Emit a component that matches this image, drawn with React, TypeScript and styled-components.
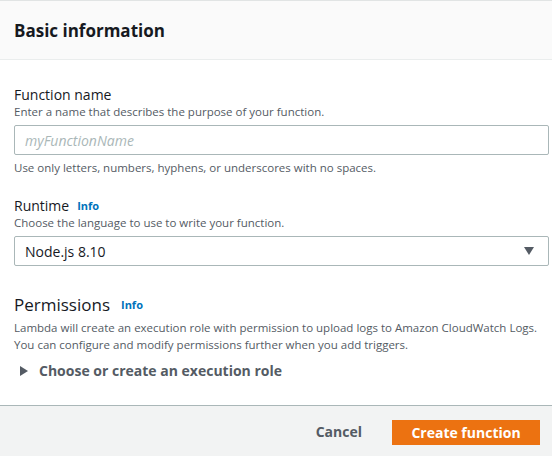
import styled, { createGlobalStyle } from "styled-components";

const GlobalStyle = createGlobalStyle`
  html, body {
    margin: 0;
    padding: 0;
    background: #ffffff;
  }
  body {
    font-family: "Open Sans", "Liberation Sans", sans-serif;
    color: #16191f;
  }
`;

export default function App() {
  return (
    <>
      <GlobalStyle />
      <Panel>
        <Header>
          <Title>Basic information</Title>
        </Header>

        <Body>
          <Field>
            <Label>Function name</Label>
            <Description>
              Enter a name that describes the purpose of your function.
            </Description>
            <TextInput placeholder="myFunctionName" />
            <Constraint>
              Use only letters, numbers, hyphens, or underscores with no spaces.
            </Constraint>
          </Field>

          <Field>
            <Label>
              Runtime <InfoLink>Info</InfoLink>
            </Label>
            <Description>Choose the language to use to write your function.</Description>
            <Select>
              <SelectValue>Node.js 8.10</SelectValue>
              <Caret />
            </Select>
          </Field>

          <Section>
            <SectionTitle>
              Permissions <InfoLink>Info</InfoLink>
            </SectionTitle>
            <Paragraph>
              Lambda will create an execution role with permission to upload logs to Amazon CloudWatch Logs.
              <br />
              You can configure and modify permissions further when you add triggers.
            </Paragraph>
            <Expander>
              <ExpandIcon />
              Choose or create an execution role
            </Expander>
          </Section>
        </Body>

        <Footer>
          <CancelButton>Cancel</CancelButton>
          <PrimaryButton>Create function</PrimaryButton>
        </Footer>
      </Panel>
    </>
  );
}

const Panel = styled.div`
  width: 552px;
  height: 456px;
  display: flex;
  flex-direction: column;
  border-top: 1px solid #e1e4e4;
  box-sizing: border-box;
  overflow: hidden;
`;

const Header = styled.div`
  height: 58px;
  display: flex;
  align-items: center;
  padding: 0 14px;
  background: #fafafa;
  border-bottom: 1px solid #eaeded;
  flex-shrink: 0;
`;

const Title = styled.h2`
  margin: 0;
  font-size: 17px;
  font-weight: 700;
  color: #16191f;
`;

const Body = styled.div`
  flex: 1;
  padding: 26px 3px 0 14px;
`;

const Field = styled.div`
  display: flex;
  flex-direction: column;
  margin-bottom: 21px;
`;

const Label = styled.div`
  font-size: 14px;
  line-height: 18px;
  color: #16191f;
  display: flex;
  align-items: center;
  gap: 8px;
`;

const InfoLink = styled.span`
  font-size: 11px;
  font-weight: 700;
  color: #0073bb;
`;

const Description = styled.div`
  font-size: 11.5px;
  line-height: 16px;
  color: #545b64;
  margin-bottom: 5px;
`;

const TextInput = styled.input`
  box-sizing: border-box;
  height: 30px;
  width: 100%;
  border: 1px solid #aab7b8;
  border-radius: 2px;
  padding: 0 10px;
  font-family: inherit;
  font-size: 14px;
  &::placeholder {
    color: #aab7b8;
    font-style: italic;
  }
`;

const Constraint = styled.div`
  font-size: 11.5px;
  line-height: 17px;
  color: #545b64;
  margin-top: 4px;
`;

const Select = styled.div`
  box-sizing: border-box;
  height: 30px;
  border: 1px solid #aab7b8;
  border-radius: 2px;
  padding: 0 14px 0 10px;
  display: flex;
  align-items: center;
  justify-content: space-between;
`;

const SelectValue = styled.span`
  font-size: 14px;
  color: #16191f;
`;

const Caret = styled.span`
  width: 0;
  height: 0;
  border-left: 5px solid transparent;
  border-right: 5px solid transparent;
  border-top: 8px solid #545b64;
`;

const Section = styled.div`
  margin-top: 27px;
`;

const SectionTitle = styled.div`
  font-size: 17px;
  line-height: 24px;
  display: flex;
  align-items: center;
  gap: 11px;
  margin-bottom: 2px;
`;

const Paragraph = styled.p`
  margin: 0;
  font-size: 11.5px;
  line-height: 17px;
  color: #545b64;
`;

const Expander = styled.div`
  margin-top: 8px;
  line-height: 20px;
  padding-left: 6px;
  display: flex;
  align-items: center;
  gap: 11px;
  font-size: 14px;
  font-weight: 700;
  color: #545b64;
`;

const ExpandIcon = styled.span`
  width: 0;
  height: 0;
  border-top: 5px solid transparent;
  border-bottom: 5px solid transparent;
  border-left: 8px solid #545b64;
`;

const Footer = styled.div`
  height: 51px;
  flex-shrink: 0;
  background: #f2f3f3;
  border-top: 1px solid #aab7b8;
  display: flex;
  align-items: center;
  justify-content: flex-end;
  gap: 30px;
  padding: 0 12px 0 0;
  box-sizing: border-box;
`;

const CancelButton = styled.button`
  background: none;
  border: none;
  font-family: inherit;
  font-size: 14px;
  font-weight: 700;
  color: #545b64;
  padding: 0;
`;

const PrimaryButton = styled.button`
  width: 148px;
  height: 25px;
  background: #ec7211;
  border: none;
  font-family: inherit;
  font-size: 14px;
  font-weight: 700;
  color: #ffffff;
  padding: 0;
  margin-top: 2px;
`;
